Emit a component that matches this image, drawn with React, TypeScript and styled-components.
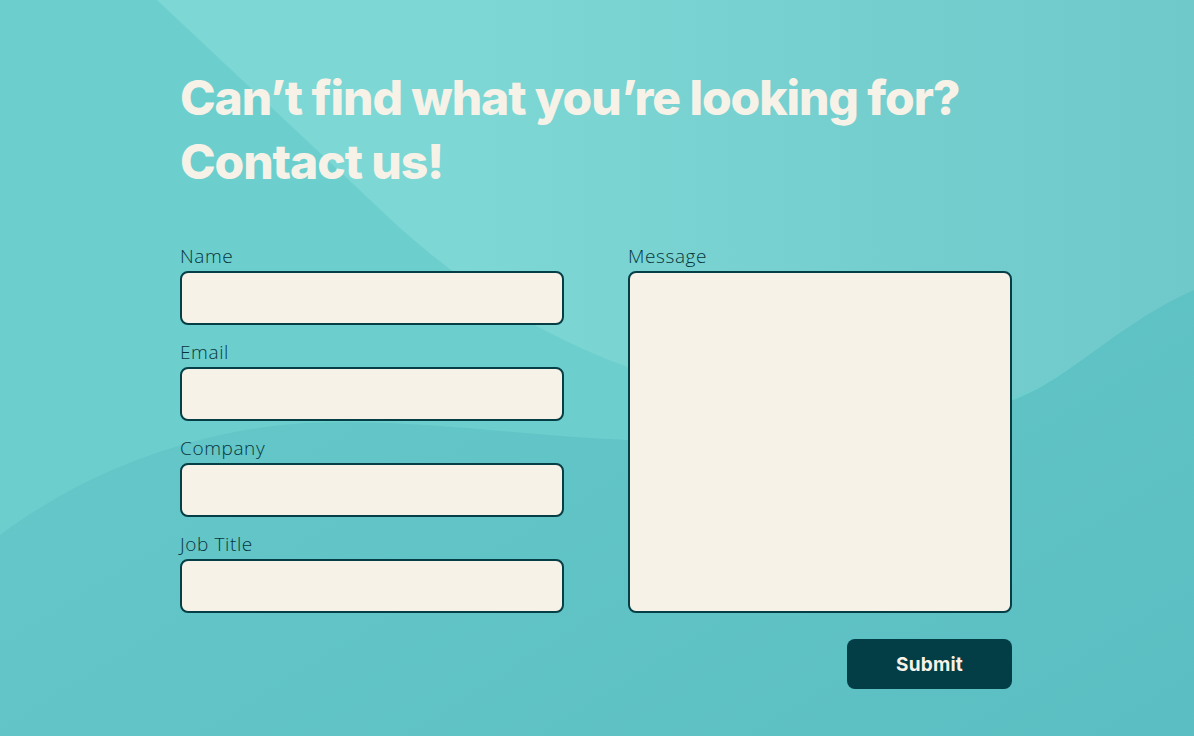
import React from "react";
import styled, { createGlobalStyle } from "styled-components";

const GlobalStyle = createGlobalStyle`
  html, body {
    margin: 0;
    padding: 0;
  }
  body {
    font-family: "Open Sans", "Noto Sans", sans-serif;
    background: #62c5c7;
  }
  * {
    box-sizing: border-box;
  }
`;

const fields = ["Name", "Email", "Company", "Job Title"];

const Backdrop = () => (
  <BackdropSvg viewBox="0 0 1194 736" preserveAspectRatio="none">
    <defs>
      <linearGradient id="base" x1="0" y1="0" x2="1" y2="1">
        <stop offset="0" stopColor="#69cbcb" />
        <stop offset="1" stopColor="#5bbec2" />
      </linearGradient>
      <linearGradient id="band" x1="0" y1="0" x2="1" y2="0">
        <stop offset="0.3" stopColor="#7dd7d4" />
        <stop offset="1" stopColor="#6fc8ca" />
      </linearGradient>
    </defs>
    <rect width="1194" height="736" fill="url(#base)" />
    <path
      d="M0,0 H1194 V290 C1120,320 1070,380 1013,400 C900,445 760,445 628,440 C520,436 420,418 306,423 C190,430 80,475 0,535 Z"
      fill="#6dcfcd"
    />
    <path
      d="M157,0 H1194 V290 C1120,322 1070,380 1013,397 C880,430 740,410 628,367 C540,335 470,290 400,228 Z"
      fill="url(#band)"
    />
  </BackdropSvg>
);

export default function App() {
  return (
    <Page>
      <GlobalStyle />
      <Backdrop />
      <Content>
        <Heading>
          Can’t find what you’re looking for?
          <br />
          Contact us!
        </Heading>
        <Form onSubmit={(e) => e.preventDefault()}>
          <Columns>
            <Column>
              {fields.map((f) => (
                <Field key={f}>
                  <Label>{f}</Label>
                  <Input type="text" />
                </Field>
              ))}
            </Column>
            <Column>
              <Field $grow>
                <Label>Message</Label>
                <TextArea />
              </Field>
            </Column>
          </Columns>
          <Actions>
            <SubmitButton type="submit">Submit</SubmitButton>
          </Actions>
        </Form>
      </Content>
    </Page>
  );
}

const Page = styled.div`
  position: relative;
  min-height: 100vh;
  overflow: hidden;
`;

const BackdropSvg = styled.svg`
  position: absolute;
  inset: 0;
  width: 100%;
  height: 100%;
  z-index: 0;
`;

const Content = styled.div`
  position: relative;
  z-index: 1;
  max-width: 834px;
  margin: 0 auto;
  padding: 66px 2px 46px 0;
`;

const Heading = styled.h1`
  margin: 0;
  font-family: "Inter", sans-serif;
  font-weight: 800;
  font-size: 48px;
  line-height: 64px;
  letter-spacing: -1.1px;
  color: #f7f2e8;
`;

const Form = styled.form`
  margin-top: 50px;
  display: flex;
  flex-direction: column;
  gap: 26px;
`;

const Columns = styled.div`
  display: grid;
  grid-template-columns: 1fr 1fr;
  column-gap: 64px;
`;

const Column = styled.div`
  display: flex;
  flex-direction: column;
  gap: 15px;
`;

const Field = styled.label<{ $grow?: boolean }>`
  display: flex;
  flex-direction: column;
  gap: 3px;
  flex: ${(p) => (p.$grow ? 1 : "none")};
`;

const Label = styled.span`
  font-family: "Open Sans", sans-serif;
  font-weight: 300;
  font-size: 19px;
  line-height: 24px;
  letter-spacing: 0.6px;
  color: #06363d;
`;

const Input = styled.input`
  height: 54px;
  width: 100%;
  background: #f7f2e8;
  border: 2px solid #063e46;
  border-radius: 8px;
  padding: 0 14px;
  font-size: 16px;
  outline: none;
`;

const TextArea = styled.textarea`
  flex: 1;
  width: 100%;
  resize: none;
  background: #f7f2e8;
  border: 2px solid #063e46;
  border-radius: 8px;
  padding: 12px 14px;
  font-size: 16px;
  outline: none;
`;

const Actions = styled.div`
  display: flex;
  justify-content: flex-end;
`;

const SubmitButton = styled.button`
  width: 165px;
  height: 50px;
  border: none;
  border-radius: 8px;
  background: #033d45;
  color: #f7f2e8;
  font-family: "Inter", sans-serif;
  font-weight: 700;
  font-size: 19px;
  letter-spacing: 0.2px;
  cursor: pointer;
`;
